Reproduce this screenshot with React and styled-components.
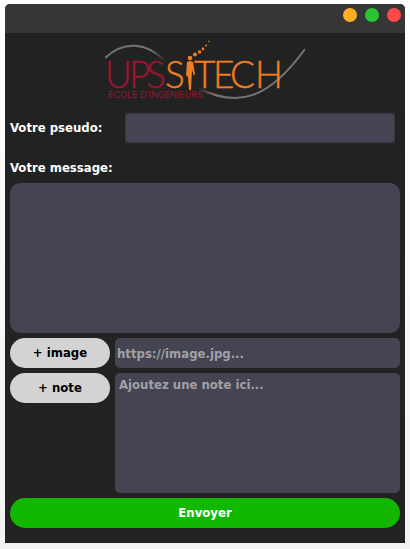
import React from "react";
import styled, { createGlobalStyle } from "styled-components";

const GlobalStyle = createGlobalStyle`
  *, *::before, *::after { box-sizing: border-box; }
  html { min-height: 100%; background: linear-gradient(#fefefe, #f3f3f3); }
  body {
    margin: 0;
    padding: 4px 5px 6px;
    font: bold 13px/16px "DejaVu Sans Condensed", Tahoma, "DejaVu Sans", sans-serif;
    color: #fff;
  }
`;

const Window = styled.main`
  background: #222;
  border-radius: 5px 5px 0 0;
  overflow: hidden;
`;

const TitleBar = styled.header`
  display: flex;
  justify-content: flex-end;
  gap: 8px;
  height: 29px;
  padding: 4px;
  background: #363636;
`;

const WindowButton = styled.button`
  width: 14px;
  height: 14px;
  padding: 0;
  border: 0;
  border-radius: 50%;
  background: ${({ $color }) => $color};
`;

const Form = styled.form`
  display: flex;
  flex-direction: column;
  gap: 5px;
  padding: 5px 5px 15px;
`;

const Logo = styled.svg`
  display: block;
  align-self: center;
  width: 200px;
  height: 70px;
`;

const Wordmark = styled.text`
  font: 300 37px Lato, sans-serif;
  fill: ${({ $color }) => $color};
  stroke: ${({ $color }) => $color};
  stroke-width: 0.4;
`;

const Tagline = styled.text`
  font: 400 9px Inter, sans-serif;
  fill: #981630;
`;

const Row = styled.div`
  display: grid;
  grid-template-columns: ${({ $label }) => ($label ? "115px 1fr" : "100px 1fr")};
  gap: ${({ $label }) => ($label ? "0" : "5px")};
  padding-right: ${({ $label }) => ($label ? "5px" : "0")};
  align-items: start;
`;

const Label = styled.label`
  padding-top: ${({ $spaced }) => ($spaced ? "10px" : "0")};
  line-height: ${({ $spaced }) => ($spaced ? "20px" : "30px")};
`;

const Input = styled.input`
  width: 100%;
  min-width: 0;
  height: 30px;
  padding: 1px 2px;
  border: ${({ $outlined }) => ($outlined ? "1px solid #3a3a46" : "0")};
  border-radius: ${({ $outlined }) => ($outlined ? "3px" : "5px")};
  background: #444452;
  color: #fff;
  font: inherit;
  outline: 0;
  &::placeholder { color: #a1a1a6; opacity: 1; }
`;

const TextArea = styled.textarea`
  display: block;
  width: 100%;
  height: ${({ $height }) => $height};
  padding: 4px;
  border: 0;
  border-radius: ${({ $radius }) => $radius};
  background: #444452;
  color: #fff;
  font: inherit;
  resize: none;
  outline: 0;
  &::placeholder { color: #a1a1a6; opacity: 1; }
`;

const Button = styled.button`
  height: 30px;
  padding: 0 8px;
  border: 0;
  border-radius: 15px;
  background: ${({ $primary }) => ($primary ? "#12b800" : "#d3d3d3")};
  color: ${({ $primary }) => ($primary ? "#fff" : "#000")};
  font: inherit;
  cursor: pointer;
`;

const red = "#981630";
const orange = "#ef7d22";

function SchoolLogo() {
  return (
    <Logo viewBox="0 0 200 70" role="img" aria-label="UPSSITECH, École d'ingénieurs">
      <defs>
        <linearGradient id="fadeOut" x1="0" x2="1">
          <stop offset="0.75" stopColor="#777170" />
          <stop offset="1" stopColor="#777170" stopOpacity="0" />
        </linearGradient>
        <linearGradient id="fadeIn" x1="0" x2="1">
          <stop offset="0" stopColor="#777170" stopOpacity="0" />
          <stop offset="0.15" stopColor="#777170" />
        </linearGradient>
      </defs>
      <path d="M0 20C18 3 41 3 61 24" fill="none" stroke="url(#fadeOut)" strokeWidth="2" />
      <path d="M93 50C132 70 163 62 200 11" fill="none" stroke="url(#fadeIn)" strokeWidth="2" />
      <Wordmark $color={red} x="0 24 41" y="50">UPS</Wordmark>
      <Wordmark $color={orange} x="60" y="50">S</Wordmark>
      <Wordmark $color={orange} x="89 108 125 150" y="50">TECH</Wordmark>
      <Tagline x="3" y="60">ÉCOLE D’INGÉNIEURS</Tagline>
      <g fill={orange}>
        <circle cx="85" cy="20" r="2.3" />
        <circle cx="90" cy="16.5" r="2" />
        <circle cx="94.5" cy="14" r="1.7" />
        <circle cx="98" cy="11" r="1.4" />
        <circle cx="101" cy="7.5" r="1" />
        <circle cx="104" cy="3.5" r="0.8" />
        <path d="M82 24Q85 22 88 24L90 36L89 38L87 32L86 52H84L83 39L81 37Z" />
      </g>
    </Logo>
  );
}

export default function App() {
  return (
    <>
      <GlobalStyle />
      <Window>
        <TitleBar>
          <WindowButton type="button" $color="#ffad25" aria-label="Réduire" />
          <WindowButton type="button" $color="#28c631" aria-label="Agrandir" />
          <WindowButton type="button" $color="#ff4848" aria-label="Fermer" />
        </TitleBar>
        <Form onSubmit={(event) => event.preventDefault()}>
          <SchoolLogo />
          <Row $label>
            <Label htmlFor="pseudo">Votre pseudo:</Label>
            <Input id="pseudo" $outlined />
          </Row>
          <Label htmlFor="message" $spaced>Votre message:</Label>
          <TextArea id="message" $height="150px" $radius="10px" />
          <Row>
            <Button type="button">+ image</Button>
            <Input aria-label="Image" placeholder="https://image.jpg..." />
          </Row>
          <Row>
            <Button type="button">+ note</Button>
            <TextArea aria-label="Note" $height="120px" $radius="5px" placeholder="Ajoutez une note ici..." />
          </Row>
          <Button type="submit" $primary>Envoyer</Button>
        </Form>
      </Window>
    </>
  );
}
